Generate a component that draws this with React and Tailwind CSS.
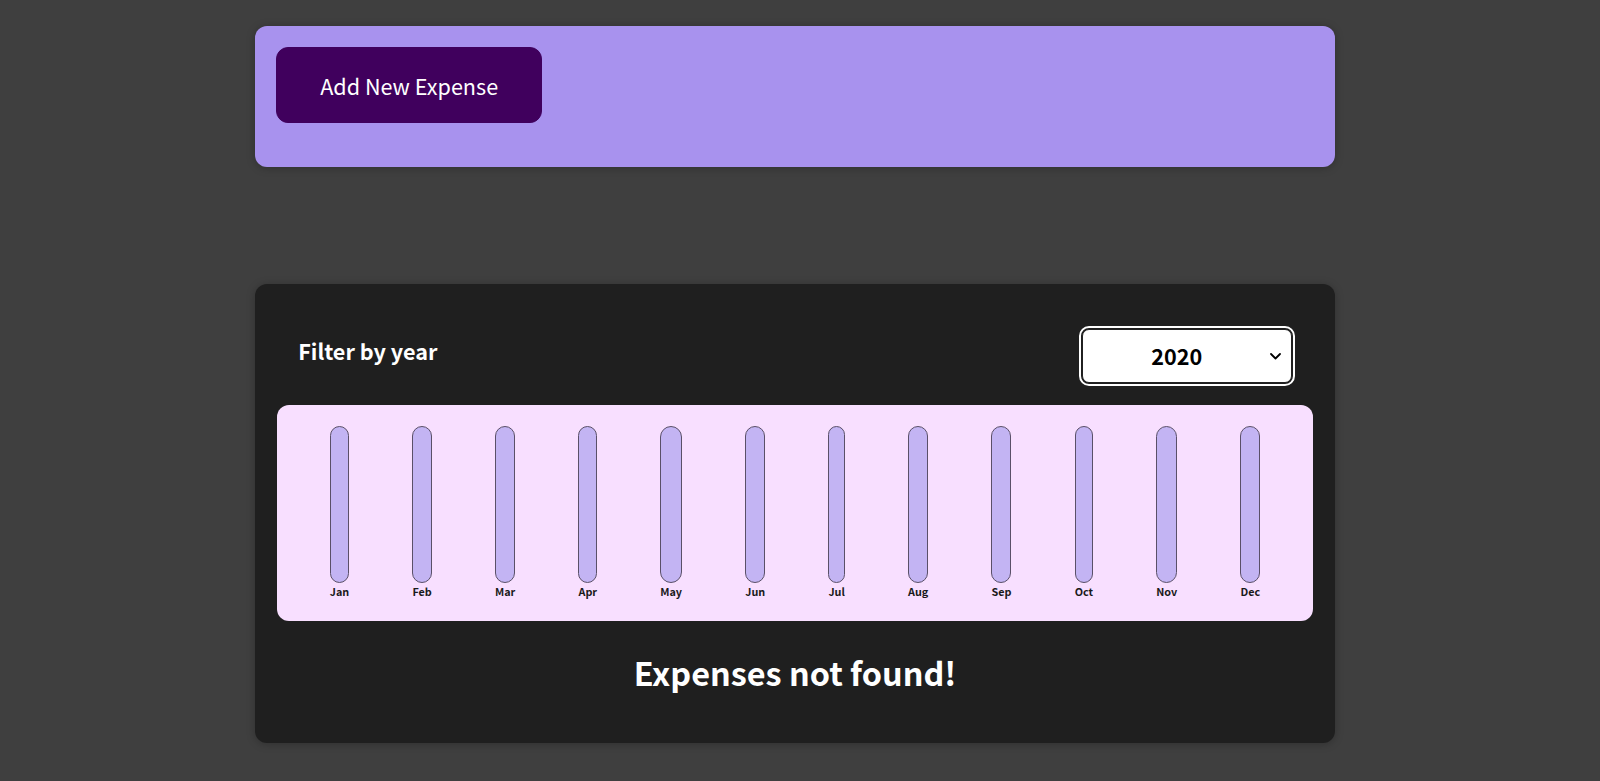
import { useState } from "react";

const months = ["Jan", "Feb", "Mar", "Apr", "May", "Jun", "Jul", "Aug", "Sep", "Oct", "Nov", "Dec"];

function ChartBar({ label }) {
  return (
    <div className="h-full flex flex-col items-center">
      <div className="h-full w-full border border-[#5a5068] rounded-[12px] bg-[#c3b4f3] overflow-hidden" />
      <div className="text-[10.8px] font-bold text-[#1a1a1a] text-center leading-[normal]">{label}</div>
    </div>
  );
}

function Chart() {
  return (
    <div className="h-[216px] p-[21.6px] rounded-[12px] bg-[#f8dfff] flex justify-around">
      {months.map((m) => (
        <ChartBar key={m} label={m} />
      ))}
    </div>
  );
}

function ExpensesFilter({ year, onChange }) {
  return (
    <div className="text-white px-[21.6px]">
      <div className="flex items-center justify-between mt-[23px] mb-[22px]">
        <label className="font-bold mb-[11px]">Filter by year</label>
        <div className="relative">
          <select
            value={year}
            onChange={(e) => onChange(e.target.value)}
            className="appearance-none w-[210px] h-[54px] pr-[20px] bg-white text-black font-bold text-center rounded-[7px] border border-[#222] outline-2 outline-offset-1 outline-white leading-[normal]"
          >
            <option value="2022">2022</option>
            <option value="2021">2021</option>
            <option value="2020">2020</option>
            <option value="2019">2019</option>
          </select>
          <svg className="absolute right-[11px] top-[24px] w-[11px] h-[7px] pointer-events-none" viewBox="0 0 11 7" fill="none" stroke="#000" strokeWidth="1.8" strokeLinecap="round" strokeLinejoin="round">
            <path d="M1 1l4.5 4.5L10 1" />
          </svg>
        </div>
      </div>
    </div>
  );
}

export default function App() {
  const [year, setYear] = useState("2020");

  return (
    <div className="min-h-screen bg-[#3f3f3f] pr-[10px] pt-[26px] pb-[38px] text-[21.6px] leading-[normal]" style={{ fontFamily: '"Noto Sans CJK JP", "Noto Sans", sans-serif' }}>
      <div className="w-[1080px] mx-auto">
        <div className="bg-[#a892ee] rounded-[12px] p-[21px] pb-[44px] shadow-[0_1px_8px_rgba(0,0,0,0.25)]">
          <button className="bg-[#40005d] border border-[#40005d] text-white rounded-[12px] px-[43.2px] py-[21.6px] leading-[normal]">
            Add New Expense
          </button>
        </div>

        <div className="mt-[117px] bg-[#1f1f1f] rounded-[12px] p-[21.6px] shadow-[0_1px_8px_rgba(0,0,0,0.25)]">
          <ExpensesFilter year={year} onChange={setYear} />
          <Chart />
          <h2 className="text-white text-center font-bold text-[32.4px] my-[27px] leading-[normal]">Expenses not found!</h2>
        </div>
      </div>
    </div>
  );
}
